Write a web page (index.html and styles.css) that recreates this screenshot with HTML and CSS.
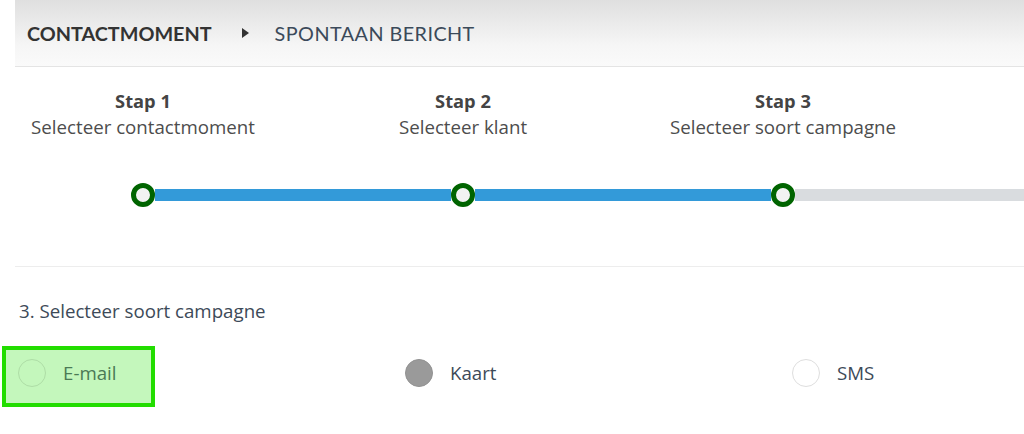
FILE: index.html
```html
<!DOCTYPE html>
<html lang="nl">
<head>
<meta charset="utf-8">
<title>Contactmoment</title>
<link rel="stylesheet" href="styles.css">
</head>
<body>
<header class="header">
  <span class="crumb crumb-main">CONTACTMOMENT</span>
  <span class="crumb-arrow"></span>
  <span class="crumb crumb-sub">SPONTAAN BERICHT</span>
</header>
<section class="steps">
  <div class="step-labels">
    <div class="step">
      <div class="step-title">Stap 1</div>
      <div class="step-sub">Selecteer contactmoment</div>
    </div>
    <div class="step">
      <div class="step-title">Stap 2</div>
      <div class="step-sub">Selecteer klant</div>
    </div>
    <div class="step">
      <div class="step-title">Stap 3</div>
      <div class="step-sub">Selecteer soort campagne</div>
    </div>
  </div>
  <div class="progress">
    <span class="dot"></span>
    <span class="seg seg-done"></span>
    <span class="dot"></span>
    <span class="seg seg-done"></span>
    <span class="dot"></span>
    <span class="seg seg-rest"></span>
  </div>
</section>
<section class="campaign">
  <h2 class="campaign-title">3. Selecteer soort campagne</h2>
  <div class="options">
    <div class="opt">
      <label class="opt-inner opt-highlight"><span class="radio radio-email"></span><span class="opt-text">E-mail</span></label>
    </div>
    <div class="opt">
      <label class="opt-inner"><span class="radio radio-checked"></span><span class="opt-text">Kaart</span></label>
    </div>
    <div class="opt opt-last">
      <label class="opt-inner"><span class="radio"></span><span class="opt-text">SMS</span></label>
    </div>
  </div>
</section>
</body>
</html>
```
FILE: styles.css
```css
* { box-sizing: border-box; }
html, body { margin: 0; padding: 0; background: #fff; }
body {
  font-family: "Open Sans", "Liberation Sans", sans-serif;
  width: 1024px;
  height: 434px;
  overflow: hidden;
}
.header {
  margin-left: 15px;
  height: 67px;
  background: linear-gradient(#dfdfdf, #f6f6f6 70%, #fafafa);
  border-bottom: 1px solid #e4e4e4;
  display: flex;
  align-items: center;
  padding-left: 12px;
  font-family: "Lato", "Open Sans", sans-serif;
  font-size: 19.8px;
}
.crumb { color: #3b4a5a; }
.crumb-main { font-weight: 700; color: #333; }
.crumb-sub { letter-spacing: 0.45px; }
.crumb-arrow {
  width: 0; height: 0;
  border-top: 5.5px solid transparent;
  border-bottom: 5.5px solid transparent;
  border-left: 7px solid #333;
  margin-left: 30px;
  margin-right: 26px;
}
.steps {
  margin-left: 15px;
  padding-top: 21px;
  padding-bottom: 59px;
  border-bottom: 1px solid #ededed;
}
.step-labels {
  display: flex;
  gap: 70px;
  padding-left: 3px;
}
.step {
  width: 250px;
  text-align: center;
  line-height: 26px;
  font-size: 18.7px;
}
.step-title { font-weight: 700; color: #444; font-size: 18.3px; }
.step-sub { color: #4d4d4d; }
.progress {
  margin-top: 43px;
  display: flex;
  align-items: center;
  padding-left: 116px;
}
.dot {
  flex: 0 0 24px;
  width: 24px; height: 24px;
  border-radius: 50%;
  border: 5px solid #006400;
  background: #f2f2f2;
  position: relative;
  z-index: 1;
}
.seg { height: 12px; }
.seg-done { flex: 0 0 296px; background: #339ad9; }
.seg-rest { flex: 1 1 auto; background: #d9dcdf; }
.campaign { padding-top: 32px; }
.campaign-title {
  margin: 0 0 23px 19px;
  font-size: 18.7px;
  font-weight: 400;
  line-height: 24px;
  color: #3d4a58;
}
.options { display: flex; padding-left: 2px; }
.opt { flex: 0 0 387px; }
.opt-last { flex: 1 1 auto; }
.opt-inner {
  display: inline-flex;
  align-items: flex-start;
  gap: 17px;
  padding: 13px 0 0 16px;
  height: 61px;
}
.opt-highlight {
  width: 153px;
  padding: 9px 0 0 12px;
  border: 4px solid #22dd00;
  background: #c4f7bc;
}
.radio {
  flex: 0 0 28px;
  width: 28px; height: 28px;
  border-radius: 50%;
  border: 1px solid #dedede;
  background: #fff;
}
.radio-email { background: #c4f7bc; border-color: #aedda6; }
.radio-checked { background: #9a9a9a; border-color: #929292; }
.opt-text {
  font-size: 18.7px;
  line-height: 27px;
  color: #3d4a58;
}
.opt-highlight .opt-text { color: #4b7a55; }
```
